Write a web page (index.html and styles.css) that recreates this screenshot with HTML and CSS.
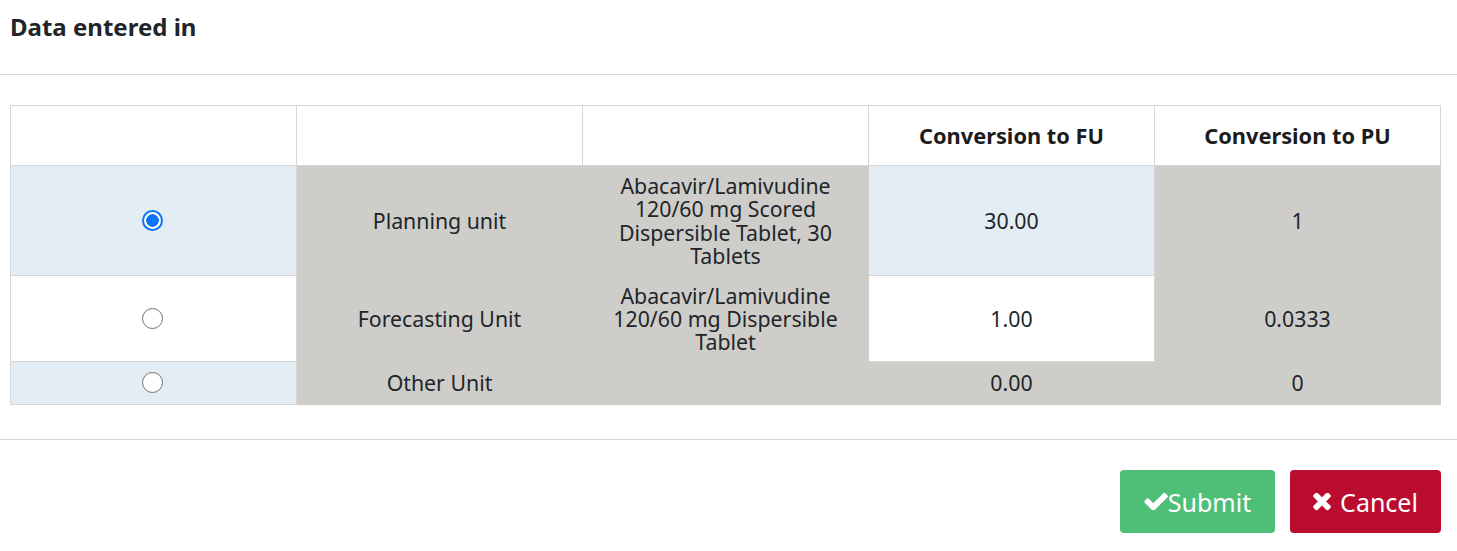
FILE: index.html
```html
<!DOCTYPE html>
<html>
<head>
<meta charset="utf-8">
<link rel="stylesheet" href="styles.css">
</head>
<body>
<div class="modal">
  <div class="modal-header">
    <h4 class="title">Data entered in</h4>
  </div>
  <div class="modal-body">
    <table class="grid">
      <colgroup>
        <col class="c"><col class="c"><col class="c"><col class="c"><col class="c">
      </colgroup>
      <thead>
        <tr>
          <th></th><th></th><th></th><th>Conversion to FU</th><th>Conversion to PU</th>
        </tr>
      </thead>
      <tbody>
        <tr class="r1">
          <td class="blue"><span class="radio checked"></span></td>
          <td class="ro">Planning unit</td>
          <td class="ro">Abacavir/Lamivudine 120/60 mg Scored Dispersible Tablet, 30 Tablets</td>
          <td class="blue">30.00</td>
          <td class="ro">1</td>
        </tr>
        <tr class="r2">
          <td class="white"><span class="radio"></span></td>
          <td class="ro">Forecasting Unit</td>
          <td class="ro">Abacavir/Lamivudine 120/60 mg Dispersible Tablet</td>
          <td class="white">1.00</td>
          <td class="ro">0.0333</td>
        </tr>
        <tr class="r3">
          <td class="blue"><span class="radio"></span></td>
          <td class="ro">Other Unit</td>
          <td class="ro"></td>
          <td class="ro">0.00</td>
          <td class="ro">0</td>
        </tr>
      </tbody>
    </table>
  </div>
  <div class="modal-footer">
    <button class="btn btn-submit"><svg class="ico-check" viewBox="100 380 1580 1060" aria-hidden="true"><path d="M1671 566q0 40-28 68l-724 724-136 136q-28 28-68 28t-68-28l-136-136-362-362q-28-28-28-68t28-68l136-136q28-28 68-28t68 28l294 295 656-657q28-28 68-28t68 28l136 136q28 28 28 68z"/></svg>Submit</button>
    <button class="btn btn-cancel"><svg class="ico-times" viewBox="105 400 1200 1200" aria-hidden="true"><path d="M1298 1322q0 40-28 68l-136 136q-28 28-68 28t-68-28l-294-294-294 294q-28 28-68 28t-68-28l-136-136q-28-28-28-68t28-68l294-294-294-294q-28-28-28-68t28-68l136-136q28-28 68-28t68 28l294 294 294-294q28-28 68-28t68 28l136 136q28 28 28 68t-28 68l-294 294 294 294q28 28 28 68z"/></svg>Cancel</button>
  </div>
</div>
</body>
</html>
```

FILE: styles.css
```css
html, body {
  margin: 0;
  padding: 0;
  background: #fff;
}
body {
  font-family: "Noto Sans", "Open Sans", sans-serif;
  color: #212529;
}
.modal {
  width: 1457px;
}
.modal-header {
  height: 74px;
  border-bottom: 1px solid #d6d6d6;
  padding: 0 10px;
  box-sizing: content-box;
}
.title {
  margin: 0;
  padding-top: 10px;
  font-size: 24px;
  line-height: 33px;
  font-weight: 700;
  color: #212529;
}
.modal-body {
  padding: 30px 17px 34px 10px;
  border-bottom: 1px solid #d6d6d6;
}
.grid {
  border-collapse: collapse;
  table-layout: fixed;
  width: 1430px;
  font-size: 21.3px;
  line-height: 23.3px;
}
.grid col.c {
  width: 286px;
}
.grid th {
  height: 59px;
  background: #fff;
  border: 1px solid #d6d6d6;
  font-weight: 700;
  font-size: 21.8px;
  text-align: center;
  vertical-align: middle;
  padding: 0 4px;
  color: #1c1c1c;
}
.grid td {
  text-align: center;
  vertical-align: middle;
  padding: 0 28px;
  border: 1px solid #d6d6d6;
}
.grid td.ro {
  background: #cecdca;
  border-color: #cecdca;
}
.grid td.blue {
  background: #e4ecf4;
}
.grid td.white {
  background: #fff;
}
.r1 td { height: 109px; }
.r2 td { height: 85px; }
.r3 td { height: 42px; }
.radio {
  display: inline-block;
  width: 21px;
  height: 21px;
  border: 1px solid #6f6f6f;
  border-radius: 50%;
  box-sizing: border-box;
  vertical-align: middle;
  background: #fff;
  position: relative;
  top: -2px;
  left: -1px;
}
.radio.checked {
  border: 2px solid #0a74ff;
  background: radial-gradient(circle, #0a74ff 0, #0a74ff 6px, #fff 6.5px);
}
.modal-footer {
  display: flex;
  justify-content: flex-end;
  gap: 15px;
  padding: 30px 16px 0 0;
}
.btn {
  height: 63px;
  border: none;
  border-radius: 4px;
  color: #fff;
  font-family: "Noto Sans", "Open Sans", sans-serif;
  font-size: 25px;
  display: flex;
  align-items: center;
  justify-content: center;
  padding: 0;
}
.btn-submit {
  width: 155px;
  background: #4fbe76;
}
.btn-cancel {
  width: 151px;
  background: #ba0c2f;
}
.btn svg {
  fill: #fff;
}
.ico-check {
  width: 24px;
  height: 17px;
}
.ico-times {
  width: 18px;
  height: 18px;
  margin-right: 9px;
}
```
